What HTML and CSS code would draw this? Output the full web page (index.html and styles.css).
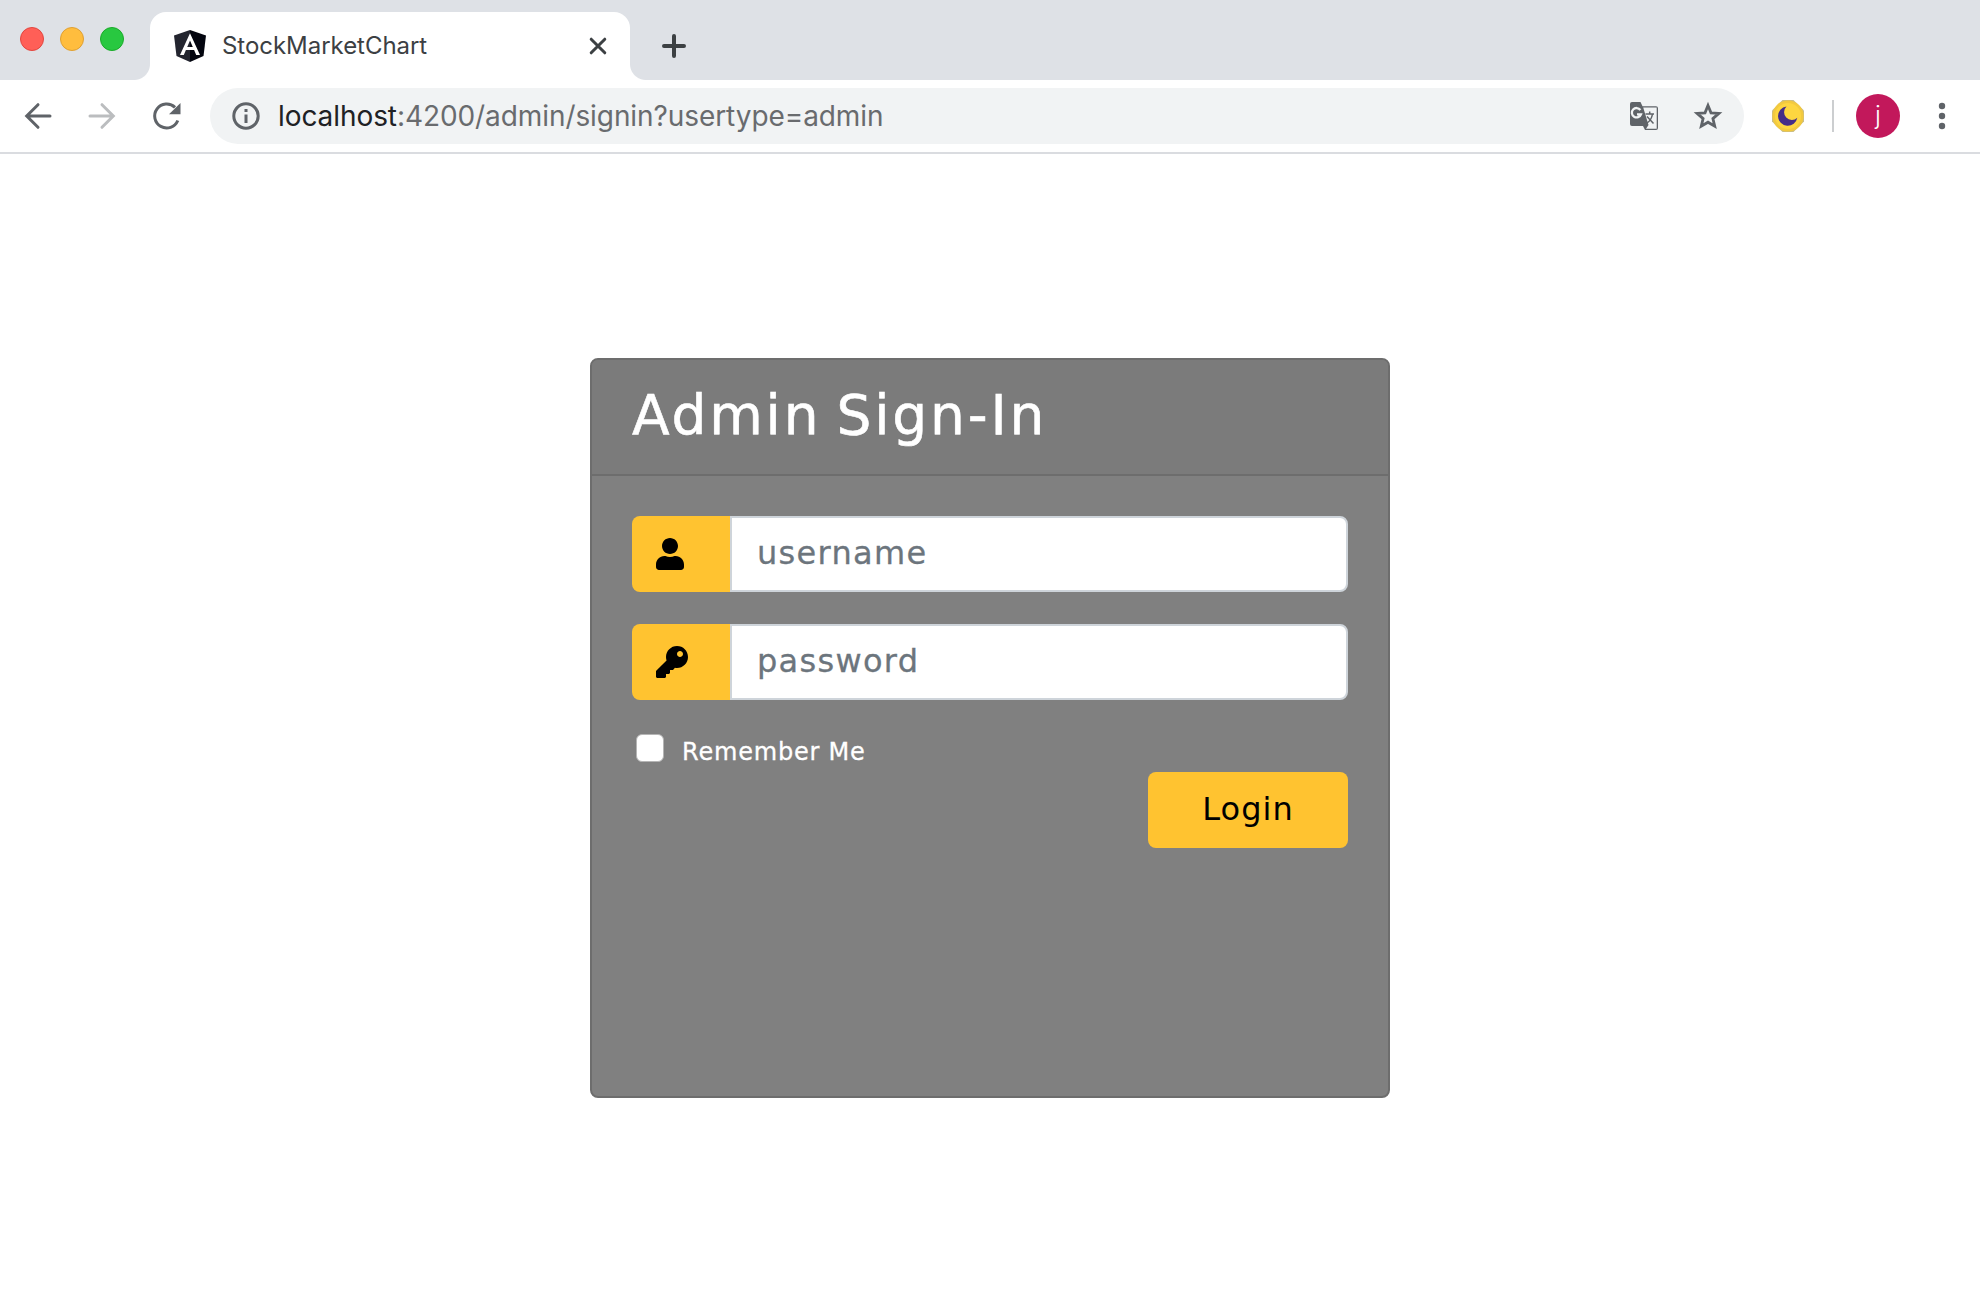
FILE: index.html
```html
<!DOCTYPE html>
<html lang="en">
<head>
<meta charset="utf-8">
<title>StockMarketChart</title>
<link rel="stylesheet" href="styles.css">
</head>
<body>
<header class="browser">
  <div class="tabstrip">
    <div class="lights"><i class="light close"></i><i class="light minimize"></i><i class="light expand"></i></div>
    <div class="tab">
      <svg class="favicon" width="32" height="32" viewBox="0 0 32 32"><path fill="#23252f" d="M16 0 0 5.500 2.500 26 16 32z"/><path fill="#03050f" d="M16 0 32 5.500 29.500 26 16 32z"/><path fill="#fff" fill-rule="evenodd" d="M16 3.200 6 25h3.800l2.100-5h8.200l2.100 5H26zM16 10.500 18.800 17h-5.600z"/></svg>
      <span class="tab-title">StockMarketChart</span>
      <svg class="tab-close" width="18" height="18" viewBox="0 0 18 18"><path d="M2.200 2.200 15.800 15.800M15.800 2.200 2.200 15.800"/></svg>
    </div>
    <svg class="new-tab" width="24" height="24" viewBox="0 0 24 24"><path d="M12 2v20M2 12h20"/></svg>
  </div>
  <div class="toolbar">
    <svg class="nav back" width="28" height="28" viewBox="0 0 28 28"><path d="M26 14H3M14 2.700 2.700 14 14 25.300"/></svg>
    <svg class="nav forward" width="28" height="28" viewBox="0 0 28 28"><path d="M2 14h23M14 2.700 25.300 14 14 25.300"/></svg>
    <svg class="nav reload" width="30" height="30" viewBox="0 0 30 30"><path d="M25.800 19.500A12 12 0 1 1 23 6.300"/><path class="solid" d="M28.500 2v11.200H17z"/></svg>
    <div class="address">
      <svg class="info" width="28" height="28" viewBox="0 0 28 28"><circle cx="14" cy="14" r="12.200"/><path d="M14 12.500V21M14 7v3"/></svg>
      <span class="url"><span class="host">localhost</span>:4200/admin/signin?usertype=admin</span>
      <svg class="translate" width="28" height="28" viewBox="0 0 28 28"><path fill="#5f6368" d="M2 0h8.500l2 4.300h13.500a2 2 0 0 1 2 2v19.700a2 2 0 0 1-2 2H15l-2-4H2a2 2 0 0 1-2-2V2a2 2 0 0 1 2-2z"/><path fill="#f1f3f4" d="M13.200 5.500H26.700v21.200H16l2.500-3.700z"/><path fill="none" stroke="#f1f3f4" stroke-width="2.300" d="M10.400 8A4.700 4.700 0 1 0 11 12.300H7"/><path fill="none" stroke="#5f6368" stroke-width="1.500" d="M15.500 12h8.500M19.700 9.500V12M17 14.500l6.500 7M22.500 12q-1 6-5.500 9"/></svg>
      <svg class="star" width="30" height="30" viewBox="0 0 30 30"><path d="m15 4.500 3 7.300 7.900.6-6 5.200 1.800 7.600L15 21.200l-6.700 4 1.800-7.600-6-5.200 7.900-.6z"/></svg>
    </div>
    <svg class="moon" width="32" height="32" viewBox="0 0 32 32"><path fill="#c9bd88" d="M10.500 0h11L32 10.500v11L21.500 32h-11L0 21.500v-11z"/><circle cx="16" cy="16" r="15.600" fill="#f2c93f"/><circle cx="16" cy="16" r="13" fill="#fdd640"/><path fill="#442d87" d="M14.500 6.500A9.700 9.700 0 1 0 25.300 17.800 6.400 6.400 0 0 1 14.500 6.500z"/></svg>
    <i class="divider"></i>
    <span class="avatar">j</span>
    <svg class="menu" width="8" height="28" viewBox="0 0 8 28"><circle cx="4" cy="4" r="3.200"/><circle cx="4" cy="14" r="3.200"/><circle cx="4" cy="24" r="3.200"/></svg>
  </div>
</header>
<main class="page">
  <section class="card">
    <div class="card-header"><h1>Admin Sign-In</h1></div>
    <form class="card-body">
      <div class="group">
        <span class="prepend"><svg width="28" height="32" viewBox="0 0 448 512"><path d="M224 256c70.700 0 128-57.300 128-128S294.700 0 224 0 96 57.300 96 128s57.300 128 128 128zm89.600 32h-16.700c-22.200 10.200-46.900 16-72.900 16s-50.600-5.800-72.900-16h-16.700C60.200 288 0 348.200 0 422.400V464c0 26.500 21.500 48 48 48h352c26.500 0 48-21.500 48-48v-41.600c0-74.200-60.200-134.400-134.400-134.400z"/></svg></span>
        <input class="field" type="text" placeholder="username">
      </div>
      <div class="group">
        <span class="prepend"><svg width="32" height="32" viewBox="0 0 512 512"><path d="M512 176.001C512 273.203 433.202 352 336 352c-11.220 0-22.190-1.062-32.827-3.069l-24.012 27.014A23.999 23.999 0 0 1 261.223 384H224v40c0 13.255-10.745 24-24 24h-40v40c0 13.255-10.745 24-24 24H24c-13.255 0-24-10.745-24-24v-78.059c0-6.365 2.529-12.470 7.029-16.971l161.802-161.802C163.108 213.814 160 195.271 160 176 160 78.798 238.797.001 335.999 0 433.488-.001 512 78.511 512 176.001zM336 128c0 26.510 21.490 48 48 48s48-21.490 48-48-21.490-48-48-48-48 21.490-48 48z"/></svg></span>
        <input class="field password" type="text" placeholder="password">
      </div>
      <label class="remember"><input class="check" type="checkbox"><span class="remember-text">Remember Me</span></label>
      <button class="login" type="button">Login</button>
    </form>
  </section>
</main>
</body>
</html>
```
FILE: styles.css
```css
* { box-sizing: border-box; }
body { margin: 0; background: #fff; font-family: Inter, "Liberation Sans", sans-serif; }
svg { display: block; flex: none; }

.browser { height: 154px; border-bottom: 2px solid #dadce0; }
.tabstrip { height: 80px; background: #dee1e6; display: flex; align-items: flex-start; }
.lights { width: 150px; padding: 27px 0 0 20px; display: flex; gap: 16px; }
.light { width: 24px; height: 24px; border-radius: 50%; border: 1px solid; }
.close { background: #ff5f57; border-color: #e2463f; }
.minimize { background: #ffbd3e; border-color: #dfa033; }
.expand { background: #28c840; border-color: #1aab29; }
.tab { position: relative; width: 480px; height: 68px; margin-top: 12px; padding: 0 23px 0 24px; background: #fff; border-radius: 16px 16px 0 0; display: flex; align-items: center; }
.tab::before, .tab::after { content: ""; position: absolute; bottom: 0; width: 16px; height: 16px; }
.tab::before { left: -16px; background: radial-gradient(circle at 0 0, #dee1e6 15.5px, #fff 16.5px); }
.tab::after { right: -16px; background: radial-gradient(circle at 100% 0, #dee1e6 15.5px, #fff 16.5px); }
.tab-title { margin: 0 0 2px 16px; flex: 1; font-size: 24px; letter-spacing: -0.04px; color: #3c4043; }
.tab-close, .new-tab { fill: none; stroke: #3c4043; stroke-linecap: round; }
.tab-close { stroke-width: 3; }
.new-tab { margin: 34px 0 0 32px; stroke-width: 4; }

.toolbar { height: 72px; display: flex; align-items: center; padding: 0 34px 0 24px; }
.nav { fill: none; stroke: #5f6368; stroke-width: 3; stroke-linecap: round; }
.forward { margin-left: 36px; stroke: #bbbdbf; }
.reload { margin-left: 36px; stroke-linecap: butt; }
.reload .solid { fill: #5f6368; stroke: none; }
.address { width: 1534px; height: 56px; margin-left: 28px; padding: 0 21px 0 22px; border-radius: 28px; background: #f1f3f4; display: flex; align-items: center; }
.info { fill: none; stroke: #5f6368; stroke-width: 3; }
.url { flex: 1; margin-left: 18px; font-size: 28px; letter-spacing: -0.08px; color: #696b6e; white-space: nowrap; }
.host { color: #202124; }
.star { margin-left: 35px; fill: none; stroke: #5f6368; stroke-width: 2.800; }
.moon { margin-left: 28px; }
.divider { width: 2px; height: 32px; margin-left: 28px; background: #ccced0; }
.avatar { width: 44px; height: 44px; margin-left: 22px; border-radius: 50%; background: #c2185b; color: #fff; font-size: 25px; font-weight: 300; line-height: 42px; text-align: center; }
.menu { margin-left: auto; fill: #5f6368; }

.page { display: flex; justify-content: center; padding-top: 204px; }
.card { width: 800px; height: 740px; border: 2px solid #6d6d6d; border-radius: 8px; background: #808080; overflow: hidden; font-family: "DejaVu Sans", sans-serif; }
.card-header { height: 116px; padding: 20px 40px; background: #7b7b7b; border-bottom: 2px solid #6d6d6d; }
h1 { margin: 0; font-size: 55px; line-height: 70px; font-weight: 400; letter-spacing: 2.800px; word-spacing: -5px; -webkit-text-stroke: 0.6px #fff; color: #fff; white-space: nowrap; }
.card-body { padding: 40px; display: flex; flex-direction: column; }
.group { display: flex; height: 76px; margin-bottom: 32px; }
.prepend { width: 98px; padding-left: 24px; display: flex; align-items: center; background: #ffc330; border-radius: 8px 0 0 8px; }
.field { flex: 1; min-width: 0; padding: 0 24px 3px 25px; border: 2px solid #ced4da; border-radius: 0 8px 8px 0; background: #fff; font: 32px "DejaVu Sans", sans-serif; letter-spacing: 1.300px; outline: none; }
.field::placeholder { color: #6c757d; opacity: 1; -webkit-text-stroke: 0.3px #6c757d; }
.remember { height: 40px; display: flex; align-items: flex-start; padding-left: 4px; color: #fff; font-size: 24px; line-height: 34px; letter-spacing: 0.800px; }
.remember-text { padding-top: 3px; -webkit-text-stroke: 0.3px #fff; }
.check { appearance: none; width: 28px; height: 28px; margin: 2px 18px 0 0; border: 1px solid #b5b5b5; border-radius: 6px; background: #fff; }
.login { align-self: flex-end; width: 200px; height: 76px; padding: 0 0 2px; border: 0; border-radius: 8px; background: #ffc330; color: #000; font: 32px "DejaVu Sans", sans-serif; letter-spacing: 1px; }
```
